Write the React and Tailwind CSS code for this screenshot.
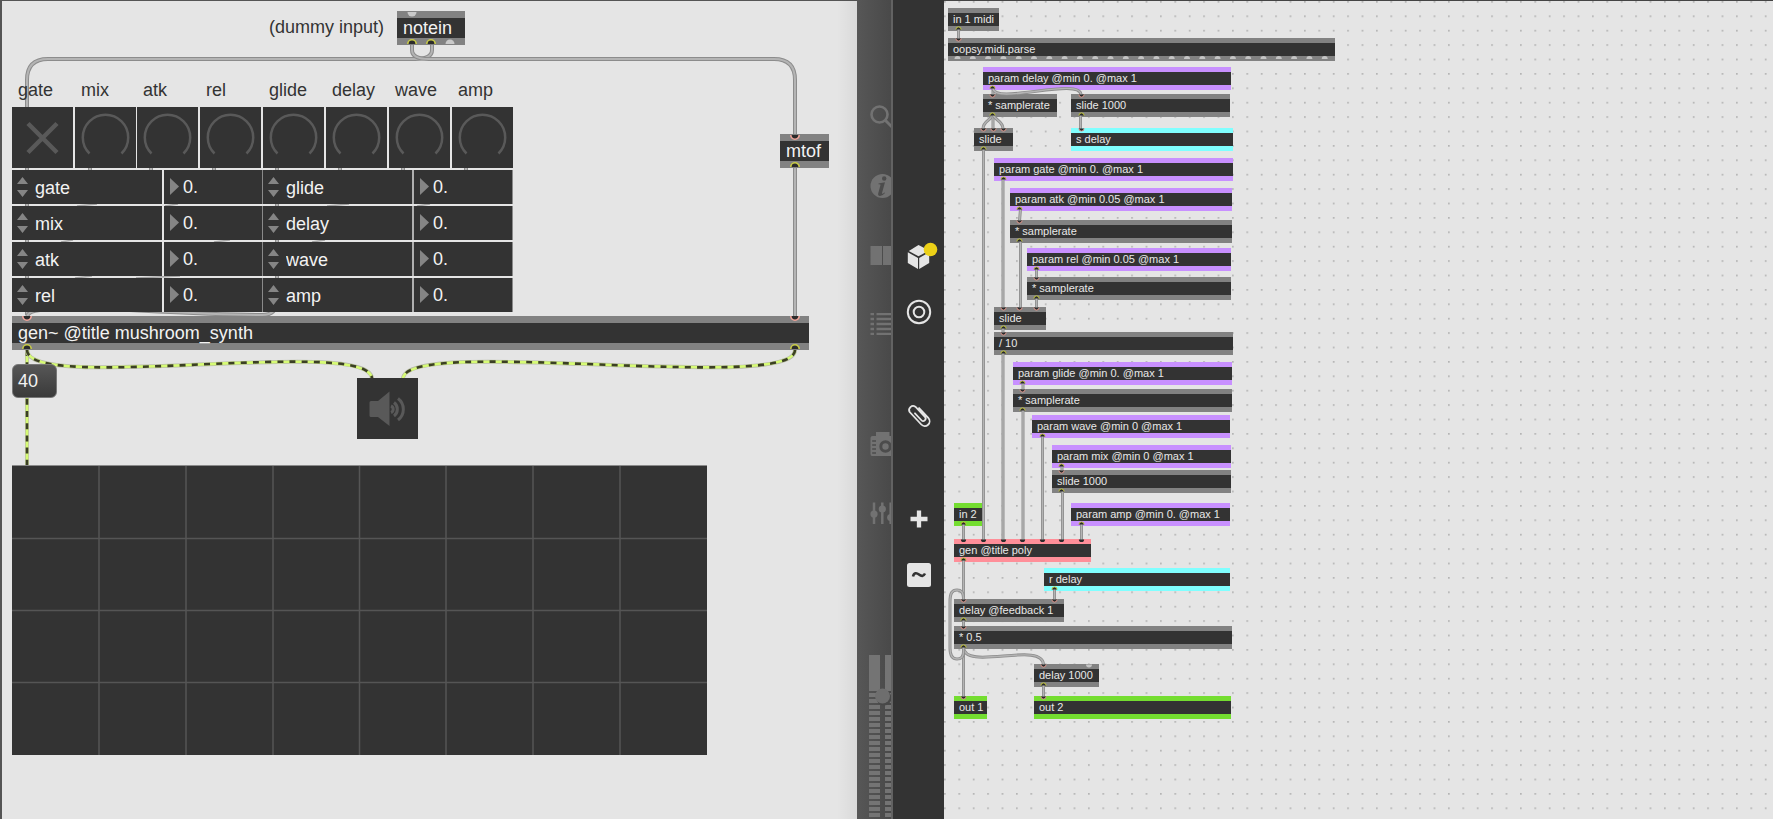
import React from "react";

const ATTRS = ["gate", "mix", "atk", "rel", "glide", "delay", "wave", "amp"];

const DIALS = [
  { name: "gate", gap: "mr-[2px]" },
  { name: "mix", gap: "mr-px" },
  { name: "atk", gap: "mr-[2px]" },
  { name: "rel", gap: "mr-[2px]" },
  { name: "glide", gap: "mr-[2px]" },
  { name: "delay", gap: "mr-[2px]" },
  { name: "wave", gap: "mr-[2px]" },
  { name: "amp", gap: "mr-0" },
];

const ROWS = [
  ["gate", "glide"],
  ["mix", "delay"],
  ["atk", "wave"],
  ["rel", "amp"],
];

const BAR = {
  gray: "border-[#828282]",
  purple: "border-[#c890ff]",
  cyan: "border-[#80ffff]",
  green: "border-[#74dd30]",
  pink: "border-[#ff8f99]",
};

const NODES = [
  { text: "in 1 midi", bar: "gray", pos: "left-[4px] top-[8px] w-[51px]" },
  { text: "oopsy.midi.parse", bar: "gray", pos: "left-[4px] top-[38px] w-[387px]" },
  { text: "param delay @min 0. @max 1", bar: "purple", pos: "left-[39px] top-[67px] w-[248px]" },
  { text: "* samplerate", bar: "gray", pos: "left-[39px] top-[94px] w-[74px]" },
  { text: "slide 1000", bar: "gray", pos: "left-[127px] top-[94px] w-[159px]" },
  { text: "slide", bar: "gray", pos: "left-[30px] top-[128px] w-[39px]" },
  { text: "s delay", bar: "cyan", pos: "left-[127px] top-[128px] w-[162px]" },
  { text: "param gate @min 0. @max 1", bar: "purple", pos: "left-[50px] top-[158px] w-[239px]" },
  { text: "param atk @min 0.05 @max 1", bar: "purple", pos: "left-[66px] top-[188px] w-[222px]" },
  { text: "* samplerate", bar: "gray", pos: "left-[66px] top-[220px] w-[222px]" },
  { text: "param rel @min 0.05 @max 1", bar: "purple", pos: "left-[83px] top-[248px] w-[204px]" },
  { text: "* samplerate", bar: "gray", pos: "left-[83px] top-[277px] w-[204px]" },
  { text: "slide", bar: "gray", pos: "left-[50px] top-[307px] w-[52px]" },
  { text: "/ 10", bar: "gray", pos: "left-[50px] top-[332px] w-[239px]" },
  { text: "param glide @min 0. @max 1", bar: "purple", pos: "left-[69px] top-[362px] w-[219px]" },
  { text: "* samplerate", bar: "gray", pos: "left-[69px] top-[389px] w-[219px]" },
  { text: "param wave @min 0 @max 1", bar: "purple", pos: "left-[88px] top-[415px] w-[198px]" },
  { text: "param mix @min 0 @max 1", bar: "purple", pos: "left-[108px] top-[445px] w-[179px]" },
  { text: "slide 1000", bar: "gray", pos: "left-[108px] top-[470px] w-[179px]" },
  { text: "in 2", bar: "green", pos: "left-[10px] top-[503px] w-[28px]" },
  { text: "param amp @min 0. @max 1", bar: "purple", pos: "left-[127px] top-[503px] w-[159px]" },
  { text: "gen @title poly", bar: "pink", pos: "left-[10px] top-[539px] w-[137px]" },
  { text: "r delay", bar: "cyan", pos: "left-[100px] top-[568px] w-[186px]" },
  { text: "delay @feedback 1", bar: "gray", pos: "left-[10px] top-[599px] w-[110px]" },
  { text: "* 0.5", bar: "gray", pos: "left-[10px] top-[626px] w-[278px]" },
  { text: "delay 1000", bar: "gray", pos: "left-[90px] top-[664px] w-[65px]" },
  { text: "out 1", bar: "green", pos: "left-[10px] top-[696px] w-[33px]" },
  { text: "out 2", bar: "green", pos: "left-[90px] top-[696px] w-[197px]" },
];

const GEN_CORDS = [
  "M14.5 29 L14.5 40",
  "M49 88 V95",
  "M49 88 C49 106 137 76 137 95",
  "M49 115 C46 121 39 121 39 129",
  "M49 115 V129",
  "M49 115 C52 121 59 121 59 129",
  "M136.5 115 V129",
  "M39.5 149 V540",
  "M59 179 V308",
  "M76.5 209 L75.5 221",
  "M76.5 241 V308",
  "M92.5 269 V278",
  "M92.5 298 V308",
  "M59 328 V333",
  "M59 353 V540",
  "M79 383 V390",
  "M79 410 V540",
  "M98.5 436 V540",
  "M118 466 V471",
  "M118.5 491 V540",
  "M137.5 524 V540",
  "M19.5 524 V540",
  "M19.5 560 V600",
  "M110.5 589 V600",
  "M19.5 620 V627",
  "M19.5 647 V697",
  "M19.5 647 C19.5 672 99.5 640 99.5 665",
  "M19.5 647 V652 C19.5 657 17 659 13 659 C8 659 6 655 6 648 V602 C6 593 8 590 13 590 C17 590 19.5 592 19.5 598 V600",
  "M99.5 685 V697",
];

const GEN_INLETS = [
  [14, 38], [48, 94], [137, 94], [39, 128], [49, 128], [59, 128], [137, 128],
  [75, 220], [92, 277], [59, 307], [75, 307], [92, 307], [59, 332], [78, 389],
  [117, 470], [19, 599], [110, 599], [19, 626], [99, 664], [99, 696], [19, 696],
];
const POLY_INLETS = [[19, 539], [39, 539], [59, 539], [78, 539], [98, 539], [117, 539], [137, 539]];
const GEN_OUTLETS = [
  [14, 31], [48, 90], [48, 117], [137, 117], [39, 151], [59, 181], [75, 211],
  [75, 243], [92, 271], [92, 300], [59, 330], [59, 355], [78, 385], [78, 412],
  [98, 438], [117, 468], [117, 493], [19, 526], [137, 526], [19, 562], [110, 591],
  [19, 622], [19, 649], [99, 687],
];

function Cord({ d, wide }) {
  return (
    <>
      <path d={d} fill="none" stroke="#8c8c8c" strokeWidth={wide ? 4 : 3} />
      <path d={d} fill="none" stroke="#b4b4b4" strokeWidth={wide ? 2 : 1.4} />
    </>
  );
}

function Signal({ d }) {
  return (
    <>
      <path d={d} fill="none" stroke="#b9bda8" strokeWidth="4" />
      <path d={d} fill="none" stroke="#d6fb74" strokeWidth="2.6" />
      <path d={d} fill="none" stroke="#3b3f24" strokeWidth="2.6" strokeDasharray="6 6.2" />
    </>
  );
}

function Inlet({ x, y, r, stroke, fill = "#2b2b2b" }) {
  return <path d={`M${x - r} ${y} A${r} ${r} 0 0 0 ${x + r} ${y}`} fill={fill} stroke={stroke} strokeWidth={r > 3.5 ? 1.6 : 1} />;
}

function Outlet({ x, y, r, stroke, fill = "#2b2b2b" }) {
  return <path d={`M${x - r} ${y} A${r} ${r} 0 0 1 ${x + r} ${y}`} fill={fill} stroke={stroke} strokeWidth={r > 3.5 ? 1.6 : 1} />;
}

function BigNode({ text, pos }) {
  return (
    <div className={`absolute h-[34px] border-y-[7px] border-[#828282] bg-[#333] pl-[6px] text-[18px] leading-[20px] whitespace-nowrap text-[#f2f2f2] ${pos}`}>
      {text}
    </div>
  );
}

function Dial({ name, gap }) {
  return (
    <div className={`relative size-[61px] bg-[#333] ${gap}`}>
      {name === "gate" ? (
        <>
          <input id="dial-gate" type="checkbox" className="absolute inset-0 size-full appearance-none" />
          <svg viewBox="0 0 61 61" className="pointer-events-none absolute inset-0 size-full">
            <path d="M16 16.5 L45 45.5 M45 16.5 L16 45.5" stroke="#595959" strokeWidth="4.5" />
          </svg>
        </>
      ) : (
        <>
          <input id={`dial-${name}`} type="range" min="0" max="1" step="0.01" defaultValue="0" className="absolute inset-0 size-full opacity-0" />
          <svg viewBox="0 0 61 61" className="pointer-events-none absolute inset-0 size-full">
            <path d="M14.5 46.5 A22.7 22.7 0 1 1 46.5 46.5" fill="none" stroke="#595959" strokeWidth="2.5" />
          </svg>
        </>
      )}
    </div>
  );
}

function AttrName({ name, edge }) {
  return (
    <div className={`relative bg-[#333] ${edge}`}>
      <select
        aria-label={`${name} attribute`}
        defaultValue={name}
        className="block h-[34px] w-full appearance-none pt-px pl-[23px] text-[18px] text-[#f2f2f2]"
      >
        {ATTRS.map((a) => (
          <option key={a}>{a}</option>
        ))}
      </select>
      <svg viewBox="0 0 12 20" className="pointer-events-none absolute top-[7px] left-[5px] h-[20px] w-[12px] fill-[#858585]">
        <path d="M0 7 L5.5 0 L11 7 Z M0 13 H11 L5.5 20 Z" />
      </svg>
    </div>
  );
}

function AttrValue({ name, edge }) {
  return (
    <div className={`relative bg-[#333] ${edge}`}>
      <svg viewBox="0 0 9 17" className="pointer-events-none absolute top-[8px] left-[6px] h-[17px] w-[9px] fill-[#858585]">
        <path d="M0 0 L9 8.5 L0 17 Z" />
      </svg>
      <input
        type="text"
        aria-label={`${name} value`}
        defaultValue="0."
        className="block h-[34px] w-full pl-[19px] text-[18px] text-[#f2f2f2]"
      />
    </div>
  );
}

function SynthPatch() {
  return (
    <main className="relative min-h-[780px] min-w-0 flex-[857] overflow-hidden bg-[#e5e5e5] text-[18px] leading-[20px] text-[#333] shadow-[inset_2px_1px_0_#555]">
      <div className="absolute inset-y-0 right-0 w-5 bg-linear-to-r from-transparent to-black/5" />

      <svg className="absolute inset-0 size-full">
        <Cord wide d="M432 44 V50 C432 57 424 59 415 59 H48 Q27 59 27 80 V315" />
        <Cord wide d="M412 44 V50 C412 57 420 59 429 59 H774 Q795 59 795 80 V135" />
        <Cord wide d="M795 168 V317" />
        {[90, 151, 214, 277, 340, 403, 466].map((x) => (
          <Cord key={x} wide d={`M${x} 165 V172`} />
        ))}
        <Cord wide d="M277 165 V300 Q277 315 262 315 C220 315 170 312 110 309" />
        <Cord wide d="M27 317 Q28 311 40 310" />
        <g stroke="#a5a5a5" strokeWidth="1.5">
          <path d="M77 206 L97 204 M165 206 L178 204 M327 206 L349 204 M417 206 L430 204" />
          <path d="M61 242 L73 240 M214 242 L230 240 M312 242 L325 240" />
          <path d="M75 278 L92 276 M136 278 L180 276" />
        </g>
      </svg>

      <p className="absolute top-[17px] left-[269px] whitespace-nowrap">(dummy input)</p>
      <BigNode text="notein" pos="left-[397px] top-[11px] w-[68px]" />
      <BigNode text="mtof" pos="left-[780px] top-[134px] w-[49px]" />

      <section className="absolute top-[80px] left-[12px] flex w-[501px] flex-col gap-[2px]">
        <div className="flex h-[88px] flex-col gap-[7px]">
          <div className="flex h-[20px]">
            {DIALS.map(({ name, gap }) => (
              <label key={name} htmlFor={`dial-${name}`} className={`w-[61px] pl-[6px] whitespace-nowrap ${gap}`}>
                {name}
              </label>
            ))}
          </div>
          <div className="flex">
            {DIALS.map((d) => (
              <Dial key={d.name} {...d} />
            ))}
          </div>
        </div>
        {ROWS.map(([a, b]) => (
          <div key={a} className="grid grid-cols-[152px_99px_151px_99px]">
            <AttrName name={a} edge="border-r-2 border-[#e5e5e5]" />
            <AttrValue name={a} edge="border-r border-[#8a8a8a]" />
            <AttrName name={b} edge="border-r-2 border-[#b0b0b0]" />
            <AttrValue name={b} edge="border-r border-[#8a8a8a]" />
          </div>
        ))}
      </section>

      <BigNode text="gen~ @title mushroom_synth" pos="left-[12px] top-[316px] w-[797px]" />

      <svg className="pointer-events-none absolute inset-0 size-full">
        <Signal d="M27 350 V465" />
        <Signal d="M27 350 C27 394 372 335 372 379" />
        <Signal d="M795 350 C795 394 403 335 403 379" />
        <Inlet x={412} y={12} r={4.5} stroke="none" fill="#c9c9c9" />
        <Outlet x={412} y={44} r={4.2} stroke="#c9cc48" />
        <Outlet x={431} y={44} r={4.2} stroke="#c9cc48" />
        <Outlet x={450} y={44} r={4.5} stroke="none" fill="#c9c9c9" />
        <Inlet x={795} y={135} r={4.2} stroke="#f0a49a" />
        <Outlet x={795} y={167} r={4.2} stroke="#c9cc48" />
        <Inlet x={27} y={316} r={4.2} stroke="#f0a49a" />
        <Inlet x={795} y={316} r={4.2} stroke="#f0a49a" />
        <Outlet x={27} y={349} r={4.2} stroke="#c9cc48" />
        <Outlet x={795} y={349} r={4.2} stroke="#c9cc48" />
      </svg>

      <button className="absolute top-[364px] left-[12px] h-[34px] w-[45px] rounded-md border border-[#777] bg-linear-to-b from-[#575757] to-[#3a3a3a] pl-[5px] text-left text-[#f2f2f2]">
        40
      </button>

      <button aria-label="Audio on or off" className="absolute top-[378px] left-[357px] size-[61px] bg-[#333]">
        <svg viewBox="0 0 61 61" className="size-full">
          <path d="M14 23 H21 L32.5 13.5 V48 L21 39 H14 Q12.5 39 12.5 37.5 V24.5 Q12.5 23 14 23 Z" fill="#595959" />
          <g fill="none" stroke="#595959" strokeWidth="3">
            <path d="M34 28 A3.5 3.5 0 0 1 34 34.5" />
            <path d="M37 24.500 A8.500 8.500 0 0 1 37 38" />
            <path d="M41 20.500 A13.500 13.500 0 0 1 41 42" />
          </g>
        </svg>
      </button>

      <div className="absolute top-[465px] left-[12px] h-[290px] w-[695px] border-t border-[#8a8a8a] bg-[#333]">
        <svg viewBox="0 0 695 289" className="size-full" stroke="#555" strokeWidth="1.5">
          <path d="M87 0 V289 M174 0 V289 M261 0 V289 M347.5 0 V289 M434 0 V289 M521 0 V289 M608 0 V289" />
          <path d="M0 72.5 H695 M0 144.5 H695 M0 216.5 H695" />
        </svg>
      </div>
    </main>
  );
}

function StripButton({ label, children, gap = "" }) {
  return (
    <button aria-label={label} className={`h-[24px] w-[24px] shrink-0 ${gap}`}>
      <svg viewBox="0 0 24 24" className="size-full overflow-visible">
        {children}
      </svg>
    </button>
  );
}

function BackStrip() {
  return (
    <aside className="flex w-9 shrink-0 flex-col overflow-hidden border-r-2 border-[#626262] bg-linear-to-r from-[#575757] to-[#494949] pt-[105px] pl-[12px]">
      <div className="flex w-[24px] flex-col gap-[45px] pl-px text-[#727272]">
        <StripButton label="Search">
          <circle cx="9.5" cy="9.5" r="8" fill="none" stroke="currentColor" strokeWidth="2.6" />
          <path d="M15 15 L23 23" stroke="currentColor" strokeWidth="3" />
        </StripButton>
        <StripButton label="Inspector">
          <circle cx="12.5" cy="12" r="12" fill="currentColor" />
          <circle cx="14.2" cy="4.5" r="2.2" fill="#4c4c4c" />
          <path d="M8.5 9.5 L15 8.3 L12 19 Q11.7 20.8 14.5 18.5 L15 19 Q12.5 22 10 22 Q7.5 22 8.3 19 L10.5 11 Q10.7 10 8.5 10.2 Z" fill="#4c4c4c" />
        </StripButton>
        <StripButton label="Reference">
          <path d="M0.5 3 H12 V22 H0.5 Z M13 3 H24 V22 H13 Z" fill="currentColor" />
        </StripButton>
        <StripButton label="Console">
          <path
            d="M0.5 2.2 H4 M6.5 2.2 H24 M0.5 7 H4 M6.5 7 H24 M0.5 12 H4 M6.5 12 H24 M0.5 17 H4 M6.5 17 H24 M0.5 21.8 H4 M6.5 21.8 H24"
            stroke="currentColor"
            strokeWidth="2.3"
          />
        </StripButton>
        <StripButton label="Snapshots" gap="mt-[51px]">
          <path d="M6 4 V0 H19.5 V4 H24 V24 H2 Q0.5 24 0.5 22 V6 Q0.5 4 2.5 4 Z" fill="currentColor" />
          <circle cx="15.5" cy="14.5" r="4.7" fill="none" stroke="#4c4c4c" strokeWidth="3" />
          <path d="M2.2 9 H6 M2.2 13 H6 M2.2 17 H6 M2.2 21 H6" stroke="#4c4c4c" strokeWidth="1.5" />
        </StripButton>
        <StripButton label="Mixer">
          <path d="M4 1.5 V23 M12.3 1.5 V23 M20.7 1.5 V23" stroke="currentColor" strokeWidth="2.5" />
          <g fill="currentColor">
            <circle cx="4" cy="13" r="3.6" />
            <circle cx="12.3" cy="8" r="3.6" />
            <circle cx="20.7" cy="16.5" r="3.6" />
          </g>
        </StripButton>
      </div>
      <svg viewBox="0 0 24 164" className="mt-[130px] h-[164px] w-[24px] shrink-0 text-[#747474]">
        <path d="M0 0 H11 V36 H0 Z M16 0 H24 V36 H16 Z" fill="currentColor" />
        <path d="M5.5 38 V164" stroke="currentColor" strokeWidth="11" strokeDasharray="4 2" />
        <path d="M20 38 V164" stroke="currentColor" strokeWidth="8" strokeDasharray="4 2" />
        <circle cx="15" cy="43" r="7.5" fill="#484848" />
        <circle cx="13.5" cy="41" r="7.5" fill="#6e6e6e" />
      </svg>
    </aside>
  );
}

function FrontStrip() {
  return (
    <nav className="flex w-[51px] shrink-0 flex-col items-center bg-[#333] pt-[245px] text-[#e5e5e5]">
      <StripButton label="Packages">
        <path d="M11.5 0 L22 5.5 L11.5 11.3 L1.8 6 Z" fill="currentColor" />
        <path d="M0.8 7.2 L11 13 V24 L0.8 18 Z M22.2 7.2 L12.2 13 V24 L22.2 18 Z" fill="currentColor" />
        <circle cx="23.5" cy="4.5" r="6.8" fill="#ecd017" />
      </StripButton>
      <StripButton label="Objects" gap="mt-[31px]">
        <g fill="none" stroke="currentColor" strokeWidth="2">
          <circle cx="12" cy="12" r="11.2" />
          <circle cx="12" cy="12" r="5.3" />
        </g>
      </StripButton>
      <StripButton label="Attachments" gap="mt-[79px]">
        <path
          transform="translate(12 12) rotate(-43)"
          d="M4.8 -5 V8.5 A4.8 4.8 0 0 1 -4.8 8.5 V-8.5 A4 4 0 0 1 3 -8.5 V5.5 A2.4 2.4 0 0 1 -1.8 5.5 V-4"
          fill="none"
          stroke="currentColor"
          strokeWidth="1.8"
          strokeLinecap="round"
        />
      </StripButton>
      <StripButton label="Add" gap="mt-[80px]">
        <path d="M12 3.5 V20.5 M3.5 12 H20.5" stroke="currentColor" strokeWidth="4.3" />
      </StripButton>
      <StripButton label="Operators" gap="mt-[32px]">
        <rect width="24" height="24" rx="2.5" fill="currentColor" />
        <path d="M6 13.5 C7 9.5 9.5 9.5 12 11.5 C14.5 13.5 16.5 13.5 18 10.5" fill="none" stroke="#333" strokeWidth="2.6" />
      </StripButton>
    </nav>
  );
}

function GenPatch() {
  return (
    <section className="relative min-h-[780px] min-w-0 flex-[829] overflow-hidden bg-[#e5e5e5] shadow-[inset_0_1px_0_#444]">
      <svg className="absolute inset-0 size-full">
        <defs>
          <pattern id="dots" x="0" y="1" width="14.4" height="14.4" patternUnits="userSpaceOnUse">
            <rect width="1.7" height="1.7" fill="#b4b4b4" />
          </pattern>
        </defs>
        <rect width="100%" height="100%" fill="url(#dots)" />
      </svg>
      {NODES.map((n) => (
        <div
          key={n.pos}
          className={`absolute h-[23px] border-y-[5px] bg-[#333] pl-[5px] text-[11px] leading-[13px] whitespace-nowrap text-[#e8e8e8] ${BAR[n.bar]} ${n.pos}`}
        >
          {n.text}
        </div>
      ))}
      <svg className="pointer-events-none absolute inset-0 size-full">
        {GEN_CORDS.map((d) => (
          <Cord key={d} d={d} />
        ))}
        {GEN_INLETS.map(([x, y]) => (
          <Inlet key={`${x}-${y}`} x={x + 0.5} y={y + 0.5} r={2.6} stroke="#e09a90" />
        ))}
        {POLY_INLETS.map(([x, y]) => (
          <Inlet key={`${x}-${y}`} x={x + 0.5} y={y + 0.5} r={2.6} stroke="none" />
        ))}
        {GEN_OUTLETS.map(([x, y]) => (
          <Outlet key={`${x}-${y}`} x={x + 0.5} y={y - 1.5} r={2.6} stroke="#c2c63c" />
        ))}
        {Array.from({ length: 25 }, (_, i) => (
          <Outlet key={i} x={13.5 + i * 15.3} y={59} r={3} stroke="none" fill="#c4c4c4" />
        ))}
        <Inlet x={145} y={664.5} r={3} stroke="none" fill="#c4c4c4" />
      </svg>
    </section>
  );
}

export default function App() {
  return (
    <div className="flex min-h-screen font-['Liberation_Sans',Arial,sans-serif]">
      <SynthPatch />
      <BackStrip />
      <FrontStrip />
      <GenPatch />
    </div>
  );
}
